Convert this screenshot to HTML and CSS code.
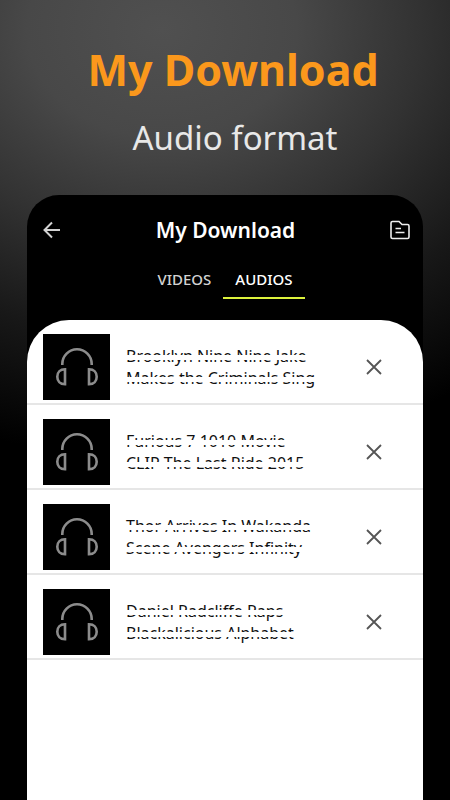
FILE: index.html
```html
<!DOCTYPE html>
<html lang="en">
<head>
<meta charset="utf-8">
<meta name="viewport" content="width=device-width, initial-scale=1">
<title>My Download</title>
<link rel="stylesheet" href="styles.css">
</head>
<body>
<svg class="defs" aria-hidden="true">
  <symbol id="headphones" viewBox="0 0 67 66">
    <path d="M19.300 31v-1a14.700 14.700 0 0 1 29.400 0v1M22 35.300v14.900c-5 0-7.700-3.200-7.700-7.500s2.700-7.400 7.700-7.400zM46 35.300v14.900c5 0 7.700-3.200 7.700-7.500s-2.700-7.400-7.700-7.400z"/>
  </symbol>
  <symbol id="close" viewBox="0 0 16 16">
    <path d="M1 1l14 14M15 1L1 15"/>
  </symbol>
</svg>
<header class="promo">
  <h1 class="promo-title">My Download</h1>
  <p class="promo-subtitle">Audio format</p>
</header>
<main class="device">
  <div class="app-bar">
    <button class="icon-button" aria-label="Back">
      <svg width="18" height="18" viewBox="0 0 18 18"><path d="M17 9H1.500M9 1.500L1.500 9 9 16.500"/></svg>
    </button>
    <h2 class="app-title">My Download</h2>
    <button class="icon-button icon-button-bright" aria-label="Files">
      <svg width="20" height="20" viewBox="0 0 20 20"><path d="M2.500 1.500H9L12 4.500h5.500q1.500 0 1.500 1.500v11q0 1.500-1.500 1.500h-15Q1 18.500 1 17V3q0-1.500 1.500-1.500zM5.500 8.500H11M5.500 12.500h9"/></svg>
    </button>
  </div>
  <nav class="tabs">
    <a class="tab" href="#videos">VIDEOS</a>
    <a class="tab tab-active" href="#audios" aria-current="page">AUDIOS</a>
  </nav>
  <ul class="sheet">
    <li class="row">
      <svg class="thumb" aria-hidden="true"><use href="#headphones"/></svg>
      <p class="name">Brooklyn Nine Nine Jake<br>Makes the Criminals Sing</p>
      <button class="remove" aria-label="Remove"><svg width="16" height="16"><use href="#close"/></svg></button>
    </li>
    <li class="row">
      <svg class="thumb" aria-hidden="true"><use href="#headphones"/></svg>
      <p class="name">Furious 7 1010 Movie<br>CLIP The Last Ride 2015</p>
      <button class="remove" aria-label="Remove"><svg width="16" height="16"><use href="#close"/></svg></button>
    </li>
    <li class="row">
      <svg class="thumb" aria-hidden="true"><use href="#headphones"/></svg>
      <p class="name">Thor Arrives In Wakanda<br>Scene Avengers Infinity</p>
      <button class="remove" aria-label="Remove"><svg width="16" height="16"><use href="#close"/></svg></button>
    </li>
    <li class="row">
      <svg class="thumb" aria-hidden="true"><use href="#headphones"/></svg>
      <p class="name">Daniel Radcliffe Raps<br>Blackalicious Alphabet</p>
      <button class="remove" aria-label="Remove"><svg width="16" height="16"><use href="#close"/></svg></button>
    </li>
  </ul>
</main>
</body>
</html>
```
FILE: styles.css
```css
* {
  box-sizing: border-box;
}

body {
  display: flex;
  flex-direction: column;
  min-height: 100vh;
  margin: 0;
  background: #000 radial-gradient(ellipse 120% 430px at 36% 30px, #505050 0%, #484848 25%, #323232 48%, #181818 72%, #000 100%);
  font-family: "Noto Sans", sans-serif;
}

h1, h2, p, ul {
  margin: 0;
  padding: 0;
}

svg {
  display: block;
  fill: none;
  stroke: currentColor;
}

button {
  padding: 0;
  border: 0;
  background: none;
}

.defs {
  position: absolute;
  width: 0;
  height: 0;
}

.promo {
  padding: 40px 0 34px 16px;
  text-align: center;
}

.promo-title {
  color: #fb981c;
  font-size: 43px;
  font-weight: 700;
  line-height: 60px;
}

.promo-subtitle {
  padding: 14px 0 0 4px;
  color: #e8e8e8;
  font-size: 33px;
  line-height: 47px;
}

.device {
  display: flex;
  flex: 1;
  flex-direction: column;
  margin: 0 27px;
  border-radius: 32px 32px 0 0;
  background: #000;
}

.app-bar {
  display: flex;
  align-items: center;
  justify-content: space-between;
  height: 70px;
  padding: 0 13px 0 16px;
}

.icon-button {
  color: #d2d2d2;
  stroke-width: 2;
}

.icon-button-bright {
  color: #eee;
  stroke-width: 1.6;
}

.app-title {
  color: #fff;
  font-size: 21px;
  font-weight: 600;
  line-height: 28px;
}

.tabs {
  display: flex;
  justify-content: center;
  height: 55px;
}

.tab {
  height: 34px;
  padding: 0 12px;
  border-bottom: 2px solid transparent;
  color: #d2d2d2;
  font-size: 15px;
  font-weight: 500;
  line-height: 28px;
  text-decoration: none;
}

.tab-active {
  border-color: #dcf23c;
  color: #fff;
}

.sheet {
  flex: 1;
  border-radius: 42px 42px 0 0;
  background: #fff;
  list-style: none;
}

.row {
  display: flex;
  align-items: center;
  padding: 14px 41px 3px 16px;
  border-bottom: 2px solid #e6e6e6;
}

.thumb {
  width: 67px;
  height: 66px;
  background: #000;
  color: #8c8c8c;
  stroke-width: 2.6;
}

.name {
  position: relative;
  flex: 1;
  margin-left: 16px;
  color: #111;
  font-size: 16px;
  line-height: 22px;
}

/* Light bands crossing each line of the name. */
.name::after {
  position: absolute;
  inset: 0;
  background: repeating-linear-gradient(transparent 0 10px, #fff 10px 15px, transparent 15px 22px);
  content: "";
}

.remove {
  color: #555;
  stroke-width: 1.8;
}
```
